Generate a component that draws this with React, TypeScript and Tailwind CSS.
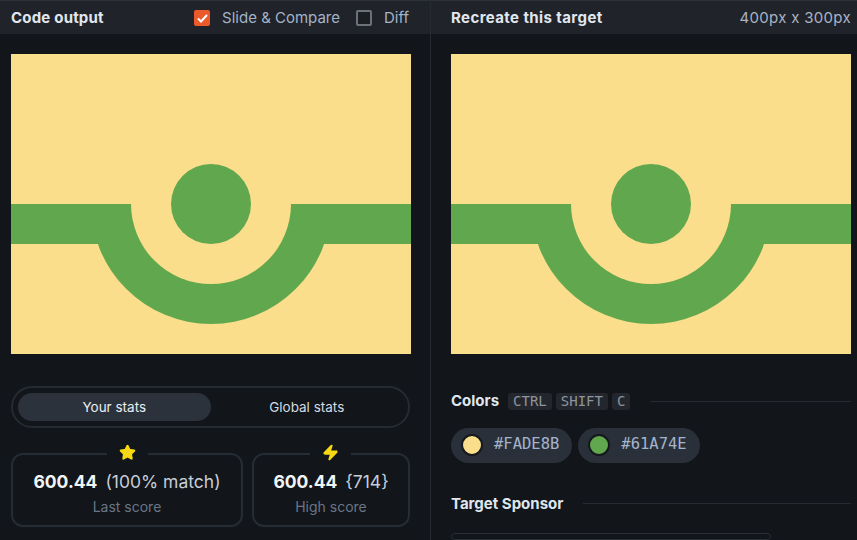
import { Star, Zap } from "lucide-react"

const Art = () => (
  <svg width="400" height="300" viewBox="0 0 400 300" className="block">
    <rect width="400" height="300" fill="#FADE8B" />
    <rect y="150" width="400" height="40" fill="#61A74E" />
    <path d="M80 150 A120 120 0 0 0 320 150 Z" fill="#61A74E" />
    <circle cx="200" cy="150" r="80" fill="#FADE8B" />
    <rect x="120" y="110" width="160" height="40" fill="#FADE8B" />
    <circle cx="200" cy="150" r="40" fill="#61A74E" />
  </svg>
)

const Chip = ({ color, label }: { color: string; label: string }) => (
  <div className="flex items-center gap-[11px] h-[35px] pl-[10px] pr-[13px] rounded-full bg-[#2a3039]">
    <span className="w-[22px] h-[22px] rounded-full border-2 border-[#15181c]" style={{ background: color }} />
    <span className="font-['DejaVu_Sans_Mono',monospace] text-[15.5px] text-[#a3b4cc]">{label}</span>
  </div>
)

const Kbd = ({ k }: { k: string }) => (
  <span className="px-[5px] h-[17px] leading-[17px] rounded-[3px] bg-[#23272d] text-[#8d949e] font-['DejaVu_Sans_Mono',monospace] text-[14px]">{k}</span>
)

export default function App() {
  return (
    <div className="w-[857px] h-[540px] overflow-hidden flex bg-[#121519] font-['Inter',sans-serif]">
      <section className="w-[431px] flex flex-col border-r border-[#262b32]">
        <header className="h-[34px] shrink-0 flex items-center pt-[1px] px-[11px] bg-[#202329] border-t border-[#2c313a]">
          <h2 className="font-bold text-[15px] text-[#e1e7ef] tracking-[0.2px]">Code output</h2>
          <label className="ml-auto flex items-center gap-[12px] text-[15px] text-[#a3b3c8]">
            <span className="w-[16px] h-[16px] rounded-[2px] bg-[#ea5a2b] flex items-center justify-center">
              <svg width="11" height="9" viewBox="0 0 11 9"><path d="M1 4.5 L4 7.5 L10 1" stroke="#fff" strokeWidth="2" fill="none" /></svg>
            </span>
            Slide &amp; Compare
          </label>
          <label className="ml-[16px] mr-[10px] flex items-center gap-[12px] text-[15px] text-[#a3b3c8]">
            <span className="w-[16px] h-[16px] rounded-[2px] border-2 border-[#6c717a] bg-[#1b1e23]" />
            Diff
          </label>
        </header>
        <div className="pt-[20px] px-[11px]">
          <Art />
        </div>
        <div className="mt-[32px] ml-[11px] w-[399px] h-[42px] rounded-full border-2 border-[#262b33] p-[5px] flex">
          <button className="flex-1 rounded-full bg-[#2b323b] text-[13.5px] text-[#e8edf3]">Your stats</button>
          <button className="flex-1 rounded-full text-[13.5px] text-[#d4dbe4]">Global stats</button>
        </div>
        <div className="mt-[25px] ml-[11px] w-[399px] flex gap-[9px]">
          <div className="relative w-[232px] h-[74px] rounded-[12px] border-2 border-[#262c34] flex flex-col items-center justify-center pt-[6px]">
            <span className="absolute -top-[11px] left-[94px] px-[12px] bg-[#121519]">
              <Star size={17} fill="#f8d812" stroke="#f8d812" />
            </span>
            <div className="text-[17.5px]">
              <span className="font-bold text-[#f2f5f8]">600.44</span>
              <span className="ml-[8px] text-[#c5ced9]">(100% match)</span>
            </div>
            <div className="text-[14px] text-[#6a7688]">Last score</div>
          </div>
          <div className="relative flex-1 h-[74px] rounded-[12px] border-2 border-[#262c34] flex flex-col items-center justify-center pt-[6px]">
            <span className="absolute -top-[11px] left-[56px] px-[12px] bg-[#121519]">
              <Zap size={17} fill="#f8d812" stroke="#f8d812" />
            </span>
            <div className="text-[17.5px]">
              <span className="font-bold text-[#f2f5f8]">600.44</span>
              <span className="ml-[8px] text-[#c5ced9]">{"{714}"}</span>
            </div>
            <div className="text-[14px] text-[#6a7688]">High score</div>
          </div>
        </div>
      </section>
      <section className="flex-1 flex flex-col">
        <header className="h-[34px] shrink-0 flex items-center pt-[1px] pl-[20px] pr-[6px] bg-[#202329] border-t border-[#2c313a]">
          <h2 className="font-bold text-[15px] text-[#e1e7ef] tracking-[0.4px]">Recreate this target</h2>
          <span className="ml-auto text-[15px] tracking-[0.3px] text-[#a9b4c4]">400px x 300px</span>
        </header>
        <div className="pt-[20px] pl-[20px]">
          <Art />
        </div>
        <div className="mt-[36px] pl-[20px] pr-[6px] flex items-center gap-[8px]">
          <h3 className="font-bold text-[15px] text-[#dfe6ee] mr-[1px]">Colors</h3>
          <div className="flex gap-[4px]">
            <Kbd k="CTRL" />
            <Kbd k="SHIFT" />
            <Kbd k="C" />
          </div>
          <hr className="flex-1 ml-[12px] border-[#262b32]" />
        </div>
        <div className="mt-[15px] pl-[20px] flex gap-[6px]">
          <Chip color="#FADE8B" label="#FADE8B" />
          <Chip color="#61A74E" label="#61A74E" />
        </div>
        <div className="mt-[30px] pl-[20px] pr-[6px] flex items-center gap-[20px]">
          <h3 className="font-bold text-[15px] text-[#dfe6ee]">Target Sponsor</h3>
          <hr className="flex-1 border-[#262b32]" />
        </div>
        <div className="mt-[18px] ml-[20px] w-[320px] h-[40px] rounded-[10px] border border-[#2a2f36]" />
      </section>
    </div>
  )
}
